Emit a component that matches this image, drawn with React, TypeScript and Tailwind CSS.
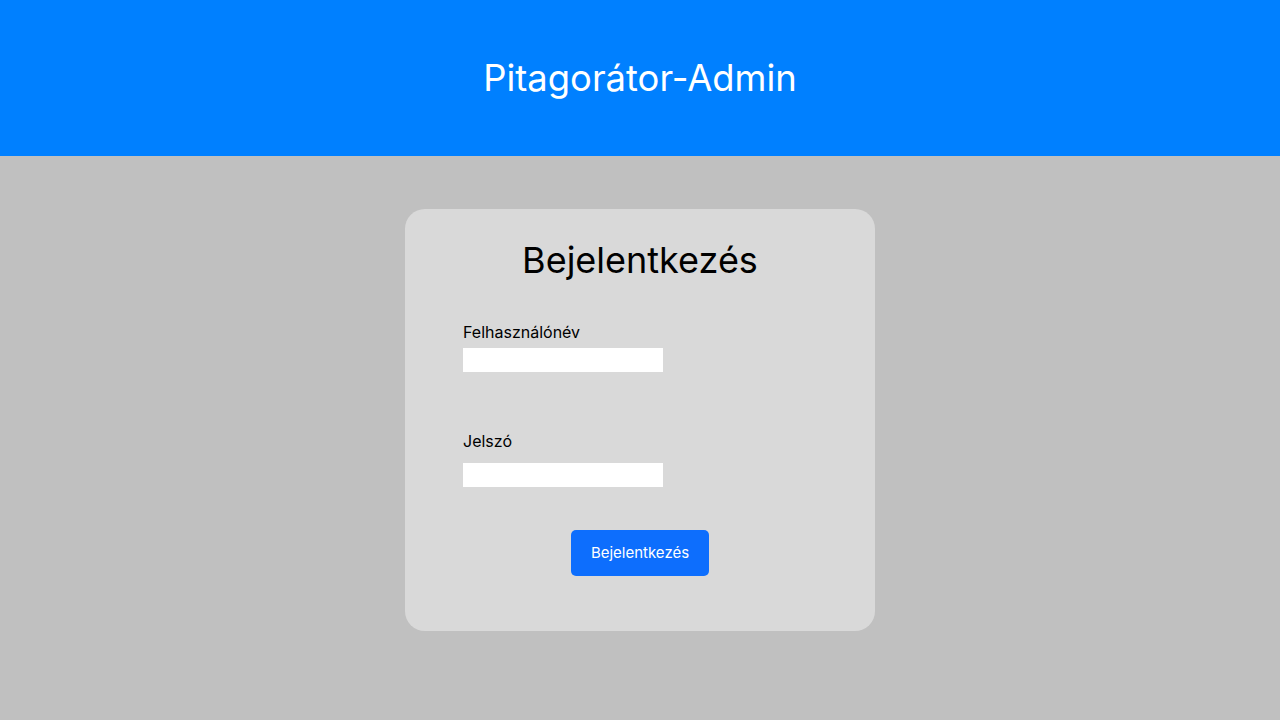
export default function App() {
  return (
    <div className="min-h-[720px] w-full bg-[#c0c0c0] font-['Inter',sans-serif]">
      <header className="flex h-[156px] items-center justify-center bg-[#0080ff]">
        <h1 className="text-[36.4px] leading-[44px] font-normal text-white">Pitagorátor-Admin</h1>
      </header>

      <div className="flex justify-center pt-[53px]">
        <div className="w-[470px] rounded-[20px] bg-[#d9d9d9] pt-[29px] pb-[55px]">
          <h2 className="text-center text-[36px] leading-[44px] text-black">Bejelentkezés</h2>

          <form className="flex flex-col px-[58px]" onSubmit={(e) => e.preventDefault()}>
            <label htmlFor="user" className="mt-[38px] text-base leading-6 text-black">
              Felhasználónév
            </label>
            <input id="user" type="text" className="mt-[4px] h-[24px] w-[200px] bg-white outline-none" />

            <label htmlFor="pass" className="mt-[57px] text-base leading-6 text-black">
              Jelszó
            </label>
            <input id="pass" type="password" className="mt-[10px] h-[24px] w-[200px] bg-white outline-none" />

            <div className="mt-[43px] flex justify-center">
              <button
                type="submit"
                className="h-[46px] rounded-[5px] bg-[#0d6efd] px-[20px] text-[15px] text-white"
              >
                Bejelentkezés
              </button>
            </div>
          </form>
        </div>
      </div>
    </div>
  );
}
